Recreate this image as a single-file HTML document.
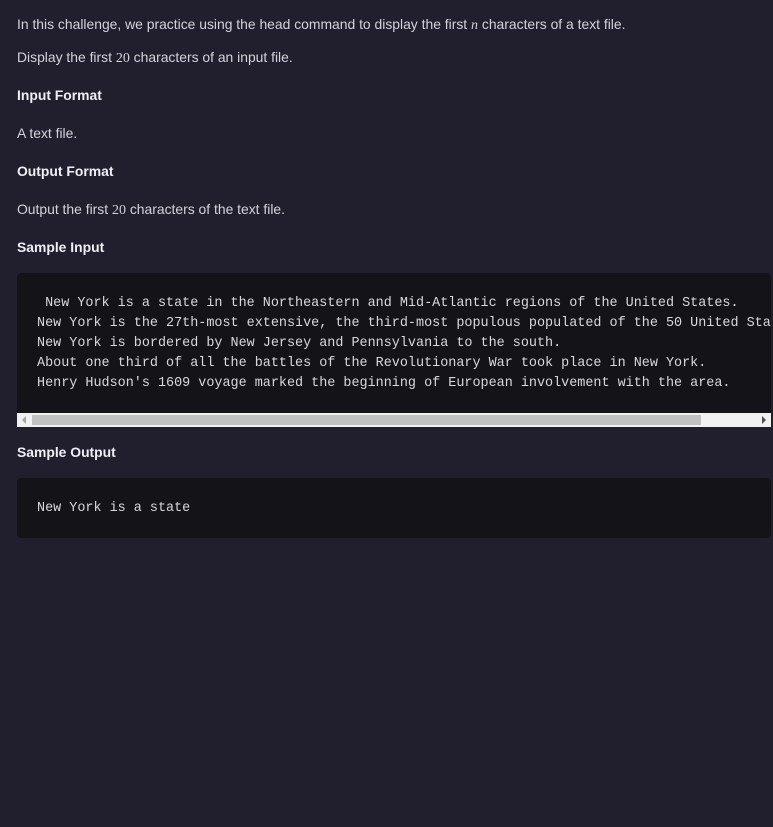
<!DOCTYPE html>
<html><head><meta charset="utf-8"><style>
html,body{margin:0;padding:0;background:#211f2d;width:773px;height:827px;overflow:hidden}
body{font-family:"Liberation Sans",sans-serif;font-size:13.9px;color:#d4d3dc;position:relative}
.t{position:absolute;left:17px;white-space:nowrap;line-height:16px}
.b{font-weight:bold;color:#f0eff5}
.m{font-family:"Liberation Serif",serif;font-size:14px}
.code{position:absolute;left:17px;width:754px;background:#131318;border-radius:4px 4px 0 0}
pre{margin:0;font-family:"Liberation Mono",monospace;font-size:13.45px;line-height:20px;color:#d8d8de;position:absolute;left:20px;white-space:pre}
</style></head><body>
<div class="t" style="top:16px">In this challenge, we practice using the head command to display the first <span class="m"><i>n</i></span> characters of a text file.</div>
<div class="t" style="top:49px">Display the first <span class="m">20</span> characters of an input file.</div>
<div class="t b" style="top:87px">Input Format</div>
<div class="t" style="top:125px">A text file.</div>
<div class="t b" style="top:163px">Output Format</div>
<div class="t" style="top:201px">Output the first <span class="m">20</span> characters of the text file.</div>
<div class="t b" style="top:239px">Sample Input</div>
<div class="code" style="top:273px;height:140px;overflow:hidden">
<pre style="top:21px"> New York is a state in the Northeastern and Mid-Atlantic regions of the United States.
New York is the 27th-most extensive, the third-most populous populated of the 50 United States.
New York is bordered by New Jersey and Pennsylvania to the south.
About one third of all the battles of the Revolutionary War took place in New York.
Henry Hudson's 1609 voyage marked the beginning of European involvement with the area.</pre>
</div>
<div style="position:absolute;left:17px;top:413px;width:754px;height:14px;background:#f1f1f1">
<div style="position:absolute;left:15px;top:2px;width:669px;height:10px;background:#c1c1c1"></div>
<div style="position:absolute;left:5px;top:3px;width:0;height:0;border-top:4px solid transparent;border-bottom:4px solid transparent;border-right:4px solid #a3a3a3"></div>
<div style="position:absolute;left:745px;top:3px;width:0;height:0;border-top:4px solid transparent;border-bottom:4px solid transparent;border-left:4px solid #505050"></div>
</div>
<div class="t b" style="top:444px">Sample Output</div>
<div class="code" style="top:478px;height:60px;border-radius:4px">
<pre style="top:21px">New York is a state</pre>
</div>
</body></html>
